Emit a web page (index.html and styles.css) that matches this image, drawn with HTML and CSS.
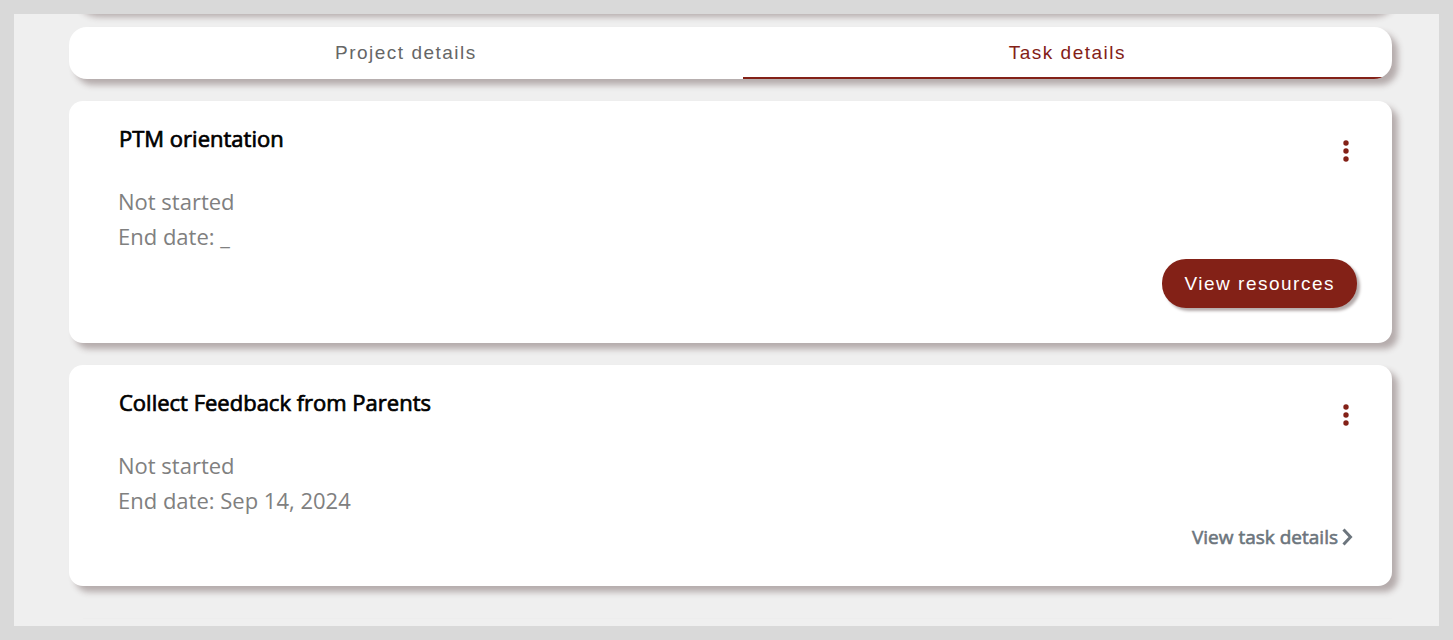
FILE: index.html
```html
<!DOCTYPE html>
<html lang="en">
<head>
<meta charset="utf-8">
<meta name="viewport" content="width=device-width, initial-scale=1">
<title>Task details</title>
<link rel="stylesheet" href="styles.css">
</head>
<body>
<main class="page">
  <div class="panel previous"></div>
  <div class="panel tabs" role="tablist">
    <button class="tab" type="button" role="tab" aria-selected="false">Project details</button>
    <button class="tab active" type="button" role="tab" aria-selected="true">Task details</button>
  </div>
  <article class="panel card">
    <header class="card-head">
      <h2 class="title">PTM orientation</h2>
      <button class="menu" type="button" aria-label="Task options">
        <svg width="6" height="22" viewBox="0 0 6 22" fill="currentColor"><circle cx="3" cy="3" r="2.7"/><circle cx="3" cy="11" r="2.7"/><circle cx="3" cy="19" r="2.7"/></svg>
      </button>
    </header>
    <p class="meta">Not started</p>
    <p class="meta">End date: _</p>
    <footer class="card-foot"><button class="resources" type="button">View resources</button></footer>
  </article>
  <article class="panel card">
    <header class="card-head">
      <h2 class="title">Collect Feedback from Parents</h2>
      <button class="menu" type="button" aria-label="Task options">
        <svg width="6" height="22" viewBox="0 0 6 22" fill="currentColor"><circle cx="3" cy="3" r="2.7"/><circle cx="3" cy="11" r="2.7"/><circle cx="3" cy="19" r="2.7"/></svg>
      </button>
    </header>
    <p class="meta">Not started</p>
    <p class="meta">End date: Sep 14, 2024</p>
    <footer class="card-foot"><a class="details" href="#">View task details<svg width="11" height="18" viewBox="0 0 11 18" fill="none" stroke="currentColor" stroke-width="3"><path d="M1.5 1.5L8.5 9L1.5 16.5"/></svg></a></footer>
  </article>
  <hr class="divider">
</main>
</body>
</html>
```
FILE: styles.css
```css
* {
  box-sizing: border-box;
}

body {
  margin: 0;
  font-family: "Open Sans", "Noto Sans", sans-serif;
  background: #efefef;
}

.page {
  min-height: 100vh;
  padding: 0 47px 0 55px;
  border: 14px solid #d9d9d9;
  overflow: hidden;
}

.panel {
  background: #fff;
  border-radius: 14px;
  box-shadow: 6px 6px 6px #b5acac;
}

.previous {
  height: 60px;
  margin-top: -63px;
  border-radius: 24px;
}

.tabs {
  display: flex;
  margin-top: 16px;
  border-radius: 18px;
  overflow: hidden;
}

.tab {
  flex: 1 1 auto;
  padding: 14px 0 12px;
  border: 0;
  border-bottom: 2px solid transparent;
  background: none;
  color: #666;
  font: 19px/24px "Liberation Sans", sans-serif;
  letter-spacing: 1.5px;
}

.tab.active {
  border-color: #832117;
  color: #832117;
}

.card {
  margin-top: 22px;
  padding: 21px 35px 35px 49px;
}

.card-head {
  display: flex;
  justify-content: space-between;
  margin-bottom: 17px;
}

.title {
  margin: 0 0 0 1px;
  font-size: 22px;
  line-height: 32px;
  font-weight: 400;
  color: #000;
  -webkit-text-stroke: 0.7px #000;
}

.menu {
  display: flex;
  margin: 13px 3px 0 0;
  padding: 5px;
  border: 0;
  background: none;
  color: #832117;
}

.meta {
  margin: 0;
  font-size: 22px;
  line-height: 35px;
  color: #808080;
}

.card-foot {
  display: flex;
  justify-content: flex-end;
  margin-top: 5px;
}

.resources {
  padding: 12px 22px;
  border: 0;
  border-radius: 24px;
  background: #832117;
  color: #fff;
  font: 19px/25px "Liberation Sans", sans-serif;
  letter-spacing: 1.5px;
  box-shadow: 3px 3px 3px #b5acac;
}

.details {
  display: flex;
  align-items: center;
  gap: 4px;
  margin-right: 4px;
  color: #6c757d;
  font-size: 19px;
  line-height: 28px;
  -webkit-text-stroke: 0.6px currentColor;
  text-decoration: none;
}

.divider {
  height: 1px;
  margin: 32px 0 0 14px;
  border: 0;
  background: #ededed;
}
```
